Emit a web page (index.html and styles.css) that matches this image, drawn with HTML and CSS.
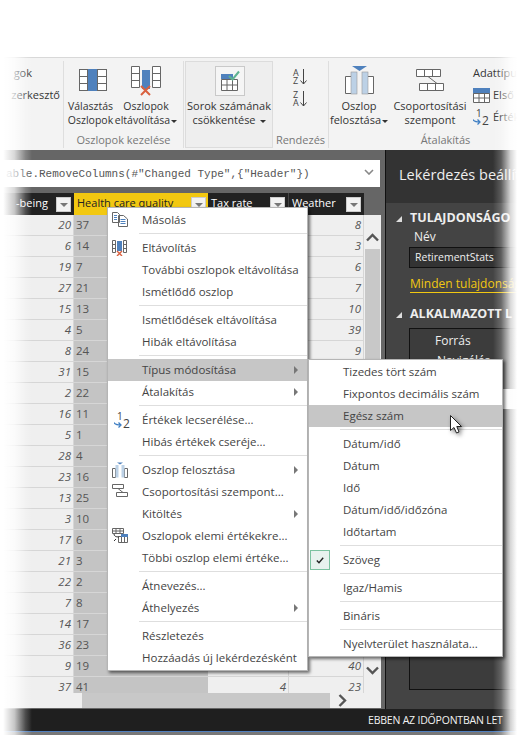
FILE: index.html
```html
<!DOCTYPE html>
<html lang="hu">
<head>
<meta charset="utf-8">
<title>Típus módosítása</title>
<link rel="stylesheet" href="styles.css">
</head>
<body>
<div class="app">
  <div class="topgap"></div>
  <div class="ribbon">
    <div class="grp grp-cut">
      <div class="cut-line cut-a">gok</div>
      <div class="cut-line cut-b">zerkesztő</div>
    </div>
    <div class="grp grp-cols">
      <div class="btns">
        <div class="rbtn w-choose">
          <div class="ic ic-choose">
            <svg width="28" height="22" viewBox="1 1 28 22"><rect x="1.5" y="1.5" width="27" height="21" fill="#fff" stroke="#666"/><rect x="10" y="1" width="9" height="22" fill="#4f81bd"/><path d="M1.5 8.5H10M1.5 15.5H10M19 8.5H28.500M19 15.500H28.500M9.500 1.500V22.500M19.500 1.500V22.500" stroke="#666" fill="none"/></svg>
          </div>
          <div class="lbl lbl-tight">Választás<br>Oszlopok</div>
        </div>
        <div class="rbtn w-remove">
          <div class="ic">
            <svg width="32" height="31" viewBox="0 0 32 31"><path d="M1.500 1.500H9.500V22.500H1.500ZM1.500 8.500H9.500M1.500 15.500H9.500M22.500 1.500H30.500V22.500H22.500ZM22.500 8.500H30.500M22.500 15.500H30.500" fill="#fff" stroke="#666"/><rect x="12" y="5" width="8" height="19" fill="#4f81bd"/><path d="M11 21L20 30M20 21L11 30" stroke="#d9613f" stroke-width="2"/></svg>
          </div>
          <div class="lbl lbl-tight">Oszlopok<br>eltávolítása<span class="caret"></span></div>
        </div>
      </div>
      <div class="gname">Oszlopok kezelése</div>
    </div>
    <div class="grp grp-rows">
      <div class="ic-box">
        <svg width="22" height="22" viewBox="0 0 22 22"><rect x="2" y="4" width="12" height="5" fill="#4f81bd"/><path d="M2.500 9.500H18.500V20.500H2.500ZM2.500 15H18.500M8 9.500V20.500M13.500 9.500V20.500" fill="#fff" stroke="#666"/><path d="M10 6L13.500 9.500L20 1.500" fill="none" stroke="#5fb391" stroke-width="2"/></svg>
      </div>
      <div class="lbl">Sorok számának<br>csökkentése<span class="caret caret-w"></span></div>
    </div>
    <div class="grp grp-sort">
      <div class="sort">
        <div class="sort-i"><span class="az"><span class="az-l">A</span><span class="az-l">Z</span></span><svg width="7" height="16" viewBox="0 0 7 16"><path d="M3.500 0V15M0.500 11.500L3.500 15L6.500 11.500" fill="none" stroke="#444"/></svg></div>
        <div class="sort-i"><span class="az"><span class="az-l">Z</span><span class="az-l">A</span></span><svg width="7" height="16" viewBox="0 0 7 16"><path d="M3.500 0V15M0.500 11.500L3.500 15L6.500 11.500" fill="none" stroke="#444"/></svg></div>
      </div>
      <div class="gname">Rendezés</div>
    </div>
    <div class="grp grp-trans">
      <div class="btns">
        <div class="rbtn w-split">
          <div class="ic">
            <svg width="29" height="30" viewBox="1 0 29 30"><path d="M8 1H23L15.500 6Z" fill="#4f81bd"/><path d="M1.500 11.500H7.500V28.500H1.500ZM23.500 11.500H29.500V28.500H23.500Z" fill="#fff" stroke="#666"/><rect x="7" y="7" width="6" height="22" fill="#bcd1e6" stroke="#999" stroke-width=".6"/><rect x="18" y="7" width="6" height="22" fill="#bcd1e6" stroke="#999" stroke-width=".6"/></svg>
          </div>
          <div class="lbl">Oszlop<br>felosztása<span class="caret"></span></div>
        </div>
        <div class="rbtn w-group">
          <div class="ic">
            <svg width="28" height="22" viewBox="1 1 28 22"><path d="M1.500 1.500H25.500V8.500H1.500ZM9.500 1.500V8.500M17.500 1.500V8.500M4.500 15.500H28.500V22.500H4.500ZM12.500 15.500V22.500M20.500 15.500V22.500M13 8.500L22 15.500" fill="#fff" stroke="#666"/></svg>
          </div>
          <div class="lbl">Csoportosítási<br>szempont</div>
        </div>
        <div class="small-col">
          <div class="small-i"><span class="small-t">Adattípus</span></div>
          <div class="small-i">
            <svg width="17" height="15" viewBox="0 0 17 15"><rect width="17" height="6" fill="#4f81bd"/><path d="M.5 5.500H16.500V14.500H.5ZM.5 10H16.500M6 5.500V14.500M11.500 5.500V14.500" fill="#fff" stroke="#666"/></svg>
            <span class="small-t">Első s</span>
          </div>
          <div class="small-i">
            <span class="onetwo"><span class="one">1</span><span class="two">2</span><svg class="ot-arrow" width="8" height="7" viewBox="0 0 8 7"><path d="M0 1.500Q1 4 7 4M4.500 1.500L7 4L4.500 6.500" fill="none" stroke="#3f7fc4" stroke-width="1.300"/></svg></span>
            <span class="small-t">Érték</span>
          </div>
        </div>
      </div>
      <div class="gname gname-trans">Átalakítás</div>
    </div>
  </div>

  <div class="work">
    <div class="data">
      <div class="formula">
        <span class="code">able.RemoveColumns(#"Changed Type",{"Header"})</span>
        <svg class="f-chev" width="10" height="6" viewBox="0 0 10 6"><path d="M1 1L5 5L9 1" fill="none" stroke="#888" stroke-width="1.600"/></svg>
      </div>
      <div class="thead">
        <div class="th th-a"><span>-being</span><i class="fbtn"></i></div>
        <div class="th th-sel"><span>Health care quality</span><i class="fbtn"></i></div>
        <div class="th th-c"><span>Tax rate</span><i class="fbtn"></i></div>
        <div class="th th-d"><span>Weather</span><i class="fbtn"></i></div>
      </div>
      <div class="tbody">
        <div class="rows">
          <div class="row"><b>20</b><u>37</u><b></b><b>8</b></div>
          <div class="row"><b>6</b><u>14</u><b></b><b>3</b></div>
          <div class="row"><b>19</b><u>7</u><b></b><b>6</b></div>
          <div class="row"><b>27</b><u>21</u><b></b><b>7</b></div>
          <div class="row"><b>15</b><u>13</u><b></b><b>10</b></div>
          <div class="row"><b>4</b><u>5</u><b></b><b>39</b></div>
          <div class="row"><b>8</b><u>24</u><b></b><b>9</b></div>
          <div class="row"><b>31</b><u>15</u><b></b><b></b></div>
          <div class="row"><b>2</b><u>22</u><b></b><b></b></div>
          <div class="row"><b>16</b><u>11</u><b></b><b></b></div>
          <div class="row"><b>5</b><u>1</u><b></b><b></b></div>
          <div class="row"><b>28</b><u>4</u><b></b><b></b></div>
          <div class="row"><b>23</b><u>16</u><b></b><b></b></div>
          <div class="row"><b>13</b><u>25</u><b></b><b></b></div>
          <div class="row"><b>3</b><u>10</u><b></b><b></b></div>
          <div class="row"><b>17</b><u>6</u><b></b><b></b></div>
          <div class="row"><b>21</b><u>3</u><b></b><b></b></div>
          <div class="row"><b>22</b><u>2</u><b></b><b></b></div>
          <div class="row"><b>7</b><u>8</u><b></b><b></b></div>
          <div class="row"><b>14</b><u>17</u><b></b><b></b></div>
          <div class="row"><b>36</b><u>23</u><b></b><b></b></div>
          <div class="row"><b>9</b><u>19</u><b></b><b>40</b></div>
          <div class="row row-last"><b>37</b><u>41</u><b>4</b><b>23</b></div>
        </div>
        <div class="vscroll">
          <svg class="chev-up" width="13" height="9" viewBox="0 0 13 9"><path d="M1 7.500L6.500 2L12 7.500" fill="none" stroke="#555" stroke-width="2.400"/></svg>
          <div class="vthumb"></div>
          <svg class="chev-down" width="13" height="9" viewBox="0 0 13 9"><path d="M1 1.500L6.500 7L12 1.500" fill="none" stroke="#555" stroke-width="2.400"/></svg>
        </div>
      </div>
      <div class="hscroll">
        <div class="hthumb"></div>
        <svg width="9" height="13" viewBox="0 0 9 13"><path d="M1.500 1L7 6.500L1.500 12" fill="none" stroke="#555" stroke-width="2.400"/></svg>
      </div>
    </div>
    <div class="panel">
      <div class="p-head">Lekérdezés beállít</div>
      <div class="p-body">
        <div class="p-sec"><span class="tri"></span>TULAJDONSÁGO</div>
        <div class="p-name">Név</div>
        <div class="p-input">RetirementStats</div>
        <div class="p-link">Minden tulajdonság</div>
        <div class="p-sec p-sec2"><span class="tri"></span>ALKALMAZOTT L</div>
        <div class="p-list">
          <div class="step">Forrás</div>
          <div class="step step2">Navigálás</div>
          <div class="step-sel"></div>
        </div>
      </div>
    </div>
  </div>
  <div class="status">EBBEN AZ IDŐPONTBAN LET</div>
  <div class="blue"></div>
  <div class="foot"></div>

  <div class="fade fade-l"></div>
  <div class="fade fade-r"></div>

  <div class="menu menu-main">
    <div class="mi"><svg class="mico" width="16" height="15" viewBox="0 0 16 15"><path d="M.5.500H5.500L7.500 2.500V10.500H.5ZM6.500 3.500H11.500L15.500 7V14.500H6.500Z" fill="#fff" stroke="#666"/><path d="M2 3.500H5M2 5.500H5M2 7.500H5M8.500 7.500H13.500M8.500 9.500H13.500M8.500 11.500H13.500" stroke="#4f81bd"/></svg>Másolás</div>
    <div class="sep"></div>
    <div class="mi"><svg class="mico" width="15" height="16" viewBox="0 0 15 16"><path d="M.5.500H3.500V12.500H.5ZM.5 4.500H3.500M.5 8.500H3.500M11.500.500H14.500V12.500H11.500ZM11.500 4.500H14.500M11.500 8.500H14.500" fill="#fff" stroke="#666"/><rect x="5" y="1" width="5" height="10" fill="#4f81bd"/><path d="M5 11L10 16M10 11L5 16" stroke="#d9613f" stroke-width="1.400"/></svg>Eltávolítás</div>
    <div class="mi">További oszlopok eltávolítása</div>
    <div class="mi">Ismétlődő oszlop</div>
    <div class="sep"></div>
    <div class="mi">Ismétlődések eltávolítása</div>
    <div class="mi">Hibák eltávolítása</div>
    <div class="sep"></div>
    <div class="mi mi-hover">Típus módosítása<i class="arr"></i></div>
    <div class="mi">Átalakítás<i class="arr"></i></div>
    <div class="sep"></div>
    <div class="mi"><span class="onetwo onetwo-m"><span class="one">1</span><span class="two">2</span><svg class="ot-arrow" width="8" height="7" viewBox="0 0 8 7"><path d="M0 1.500Q1 4 7 4M4.500 1.500L7 4L4.500 6.500" fill="none" stroke="#3f7fc4" stroke-width="1.300"/></svg></span>Értékek lecserélése...</div>
    <div class="mi">Hibás értékek cseréje...</div>
    <div class="sep"></div>
    <div class="mi"><svg class="mico" width="16" height="16" viewBox="0 0 16 16"><path d="M5 .5H11L8 2.500Z" fill="#4f81bd"/><path d="M.5 6.500H3.500V15.500H.5ZM12.500 6.500H15.500V15.500H12.500Z" fill="#fff" stroke="#666"/><rect x="3.500" y="3" width="3" height="12.500" fill="#bcd1e6"/><rect x="9.500" y="3" width="3" height="12.500" fill="#bcd1e6"/></svg>Oszlop felosztása<i class="arr"></i></div>
    <div class="mi"><svg class="mico" width="16" height="13" viewBox="0 0 16 13"><path d="M.5.500H11.500V4.500H.5ZM4.500 8.500H15.500V12.500H4.500ZM6 4.500L11 8.500" fill="#fff" stroke="#666"/></svg>Csoportosítási szempont...</div>
    <div class="mi">Kitöltés<i class="arr"></i></div>
    <div class="mi"><svg class="mico" width="16" height="15" viewBox="0 0 16 15"><path d="M.5.500H11.500V5.500H.5ZM.5 3H11.500M4 .5V5.500M8 .5V5.500M6.500 8.500H15.500V14.500H6.500ZM9.500 8.500V14.500M12.500 8.500V14.500" fill="#fff" stroke="#666"/><rect x="9" y="6" width="7" height="3" fill="#4f81bd"/><path d="M2 6Q2 9 7 9M4 11L2 13" fill="none" stroke="#333"/></svg>Oszlopok elemi értékekre...</div>
    <div class="mi">Többi oszlop elemi értéke...</div>
    <div class="sep"></div>
    <div class="mi">Átnevezés...</div>
    <div class="mi">Áthelyezés<i class="arr"></i></div>
    <div class="sep"></div>
    <div class="mi">Részletezés</div>
    <div class="mi">Hozzáadás új lekérdezésként</div>
  </div>

  <div class="menu menu-sub">
    <div class="mi">Tizedes tört szám</div>
    <div class="mi">Fixpontos decimális szám</div>
    <div class="mi mi-hover">Egész szám</div>
    <div class="sep"></div>
    <div class="mi">Dátum/idő</div>
    <div class="mi">Dátum</div>
    <div class="mi">Idő</div>
    <div class="mi">Dátum/idő/időzóna</div>
    <div class="mi">Időtartam</div>
    <div class="sep"></div>
    <div class="mi"><span class="check"><svg width="8" height="7" viewBox="0 0 8 7"><path d="M.8 3.500L3 5.800L7.200 .8" fill="none" stroke="#222" stroke-width="1.400"/></svg></span>Szöveg</div>
    <div class="sep"></div>
    <div class="mi">Igaz/Hamis</div>
    <div class="sep"></div>
    <div class="mi">Bináris</div>
    <div class="sep"></div>
    <div class="mi">Nyelvterület használata...</div>
  </div>

  <svg class="cursor" width="14" height="20" viewBox="0 0 14 20"><path d="M.5.500V15.500L4 12.500L6.500 18L9 17L6.800 11.500H11.500Z" fill="#fff" stroke="#222"/></svg>
</div>
</body>
</html>
```

FILE: styles.css
```css
* { box-sizing: border-box; }
html, body { margin: 0; padding: 0; background: #fff; }
body { font-family: "Open Sans", "Noto Sans", sans-serif; font-size: 11.5px; color: #444; }
.app { position: relative; width: 525px; height: 735px; overflow: hidden; background: #fff; }
.topgap { height: 57px; }

/* ribbon */
.ribbon { display: flex; height: 93px; padding-top: 3px; background: #f3f3f3; border-top: 1px solid #d8d8d8; font-size: 11px; line-height: 14px; color: #333; }
.grp { height: 87px; position: relative; flex: none; }
.grp-cut { width: 64px; border-right: 1px solid #dedede; overflow: hidden; padding-top: 5px; }
.cut-line { display: flex; justify-content: flex-end; white-space: nowrap; }
.cut-a { padding-right: 31px; }
.cut-b { padding-right: 3px; margin-top: 8px; }
.grp-cols { width: 120px; border-right: 1px solid #dedede; display: flex; flex-direction: column; }
.btns { display: flex; flex: 1; padding-left: 1px; }
.rbtn { display: flex; flex-direction: column; align-items: center; flex: none; }
.rbtn .ic { height: 38px; display: flex; align-items: center; justify-content: center; }
.rbtn .ic-choose { padding-left: 5px; }
.lbl { text-align: center; white-space: nowrap; }
.lbl-tight { font-size: 10.5px; }
.gname { height: 17px; line-height: 17px; text-align: center; color: #777; white-space: nowrap; }
.w-choose { width: 51px; }
.w-remove { width: 60px; }
.caret { display: inline-block; width: 0; height: 0; margin-left: 1px; vertical-align: middle; border: 3px solid transparent; border-top: 3px solid #333; border-bottom: 0; }
.caret-w { margin-left: 4px; }
.grp-rows { width: 88px; margin-left: 1px; background: #eeeeee; border: 1px solid #dcdcdc; display: flex; flex-direction: column; align-items: center; }
.ic-box { width: 30px; height: 30px; margin: 4px 0 3px 1px; background: #f5f5f5; border: 1px solid #c9c9c9; display: flex; align-items: center; justify-content: center; }
.grp-sort { width: 56px; border-right: 1px solid #dedede; display: flex; flex-direction: column; }
.sort { flex: 1; padding: 5px 0 0 20px; }
.sort-i { display: flex; align-items: center; gap: 1px; height: 22px; }
.az { display: flex; flex-direction: column; font-size: 9px; line-height: 8px; color: #444; }
.az-l { display: block; height: 8px; }
.grp-trans { width: 196px; display: flex; flex-direction: column; padding-left: 1px; }
.w-split { width: 56px; }
.w-group { width: 86px; }
.small-col { padding: 1px 0 0 0; width: 53px; flex: none; }
.small-i { display: flex; align-items: center; height: 22px; white-space: nowrap; gap: 3px; }
.onetwo { position: relative; display: block; width: 17px; height: 19px; flex: none; color: #444; font-size: 11px; }
.one, .two { position: absolute; line-height: 11px; }
.one { left: 3px; top: 0; font-size: 10px; }
.two { left: 9px; top: 7px; font-size: 12px; }
.ot-arrow { position: absolute; left: 0; top: 10px; }
.onetwo-m { position: absolute; left: 6px; top: 2px; }
.gname-trans { padding-left: 36px; }

/* work area */
.work { display: flex; height: 559px; }
.data { width: 385px; flex: none; background: #666; padding-top: 10px; }
.formula { height: 27px; width: 380px; background: #fff; display: flex; align-items: center; position: relative; white-space: nowrap; overflow: hidden; }
.code { font-family: "Liberation Mono", monospace; font-size: 11px; color: #555; margin-left: 6px; }
.f-chev { position: absolute; right: 6px; top: 9px; }
.thead { display: flex; height: 22px; width: 364px; margin-top: 6px; background: #222; color: #fff; font-size: 11px; }
.th { display: flex; align-items: center; justify-content: space-between; padding: 0 3px; white-space: nowrap; overflow: hidden; }
.th span { position: relative; top: -2px; }
.th-a { width: 74px; justify-content: flex-end; gap: 8px; }
.th-sel { width: 134px; background: #f2c811; color: #222; padding-right: 2px; }
.th-c { width: 81px; border-right: 1px solid #444; }
.th-d { width: 75px; }
.fbtn { position: relative; display: block; flex: none; width: 15px; height: 15px; background: #f2f2f2; border: 1px solid #ccc; }
.fbtn::after { content: ""; position: absolute; left: 3px; top: 5px; border: 4px solid transparent; border-top: 4px solid #777; border-bottom: 0; }
.tbody { display: flex; height: 478px; overflow: hidden; }
.rows { width: 364px; background: #efefef; font-size: 11.5px; color: #555; }
.row { display: grid; grid-template-columns: 74px 134px 81px 75px; height: 21px; border-bottom: 1px solid #d6d6d6; line-height: 20px; }
.row-last { height: 16px; border-bottom: 0; overflow: hidden; }
.row b { font-weight: 400; font-style: italic; text-align: right; padding-right: 2px; border-right: 1px solid #d6d6d6; }
.row u { text-decoration: none; background: #c4c4c4; padding-left: 2px; }
.vscroll { width: 17px; background: #efefef; position: relative; padding-left: 1px; }
.chev-up { position: absolute; left: 2px; top: 18px; }
.vthumb { position: absolute; left: 1px; top: 34px; width: 15px; height: 406px; background: #c8c8c8; }
.chev-down { position: absolute; left: 2px; top: 451px; }
.hscroll { display: flex; align-items: center; width: 381px; height: 15px; background: #efefef; padding-left: 82px; }
.hthumb { width: 248px; height: 15px; background: #c8c8c8; margin-right: 8px; }
.panel { flex: 1; background: #444; border-left: 1px solid #111; color: #eee; white-space: nowrap; overflow: hidden; }
.p-head { height: 53px; background: #333; padding: 14px 0 0 13px; font-size: 14.5px; line-height: 22px; }
.p-body { padding-left: 13px; }
.p-sec { position: relative; padding-left: 11px; font-weight: 700; font-size: 12.5px; line-height: 18px; margin-top: 6px; }
.tri { position: absolute; left: -3px; top: 7px; width: 0; height: 0; border-style: solid; border-width: 0 0 6px 6px; border-color: transparent transparent #ddd transparent; }
.p-sec2 { margin-top: 12px; }
.p-name { padding-left: 15px; line-height: 16px; margin-top: 2px; font-size: 12px; }
.p-input { margin: 2px 0 0 10px; height: 21px; border: 1px solid #111; border-right: 0; background: #333; padding-left: 5px; line-height: 19px; font-size: 10.5px; }
.p-link { margin: 8px 0 0 11px; display: inline-block; line-height: 16px; font-size: 12px; color: #f2c811; border-bottom: 1px solid #f2c811; }
.p-list { margin: 5px 0 0 10px; height: 362px; border: 1px solid #111; border-right: 0; background: #3c3c3c; padding-top: 2px; position: relative; }
.step { padding-left: 25px; line-height: 20px; font-size: 12px; }
.step2 { padding-left: 27px; }
.step-sel { position: absolute; left: 0; right: 0; top: 60px; height: 20px; background: #f4f4f4; }
.status { height: 22px; background: #1f1f1f; color: #f2f2f2; font-size: 10.5px; letter-spacing: -.2px; line-height: 22px; padding-left: 368px; white-space: nowrap; overflow: hidden; }
.blue { height: 1px; background: #4f7fc0; }
.foot { height: 3px; background: #777; }

/* edge fades */
.fade { position: absolute; top: 57px; bottom: 0; }
.fade-l { left: 0; width: 32px; background: linear-gradient(90deg, #fff 0, #fff 10%, rgba(255,255,255,.75) 45%, rgba(255,255,255,.2) 80%, rgba(255,255,255,0) 100%); }
.fade-r { right: 0; width: 32px; background: linear-gradient(90deg, rgba(255,255,255,0) 0, rgba(255,255,255,.2) 25%, rgba(255,255,255,.8) 55%, #fff 75%); }

/* menus */
.menu { position: absolute; background: #fff; border: 1px solid #b5b5b5; box-shadow: 2px 2px 3px rgba(0,0,0,.55); padding-top: 1px; color: #444; font-size: 11.5px; }
.menu-main { left: 107px; top: 207px; width: 201px; height: 464px; }
.menu-sub { left: 308px; top: 359px; width: 195px; height: 298px; }
.mi { position: relative; height: 22px; line-height: 22px; padding-left: 34px; white-space: nowrap; }
.mi-hover { background: #c6c6c6; }
.sep { height: 6px; margin-left: 31px; position: relative; }
.sep::after { content: ""; position: absolute; left: 0; right: 0; top: 2px; height: 1px; background: #dedede; }
.arr { position: absolute; right: 9px; top: 7px; width: 0; height: 0; border-style: solid; border-width: 4px 0 4px 4px; border-color: transparent transparent transparent #777; }
.mico { position: absolute; left: 4px; top: 3px; }
.check { position: absolute; left: 1px; top: 1px; width: 20px; height: 20px; background: #e8f2ee; border: 1px solid #7cc2a0; display: flex; align-items: center; justify-content: center; }
.cursor { position: absolute; left: 450px; top: 415px; filter: drop-shadow(2px 2px 2px rgba(0,0,0,.5)); }
```
